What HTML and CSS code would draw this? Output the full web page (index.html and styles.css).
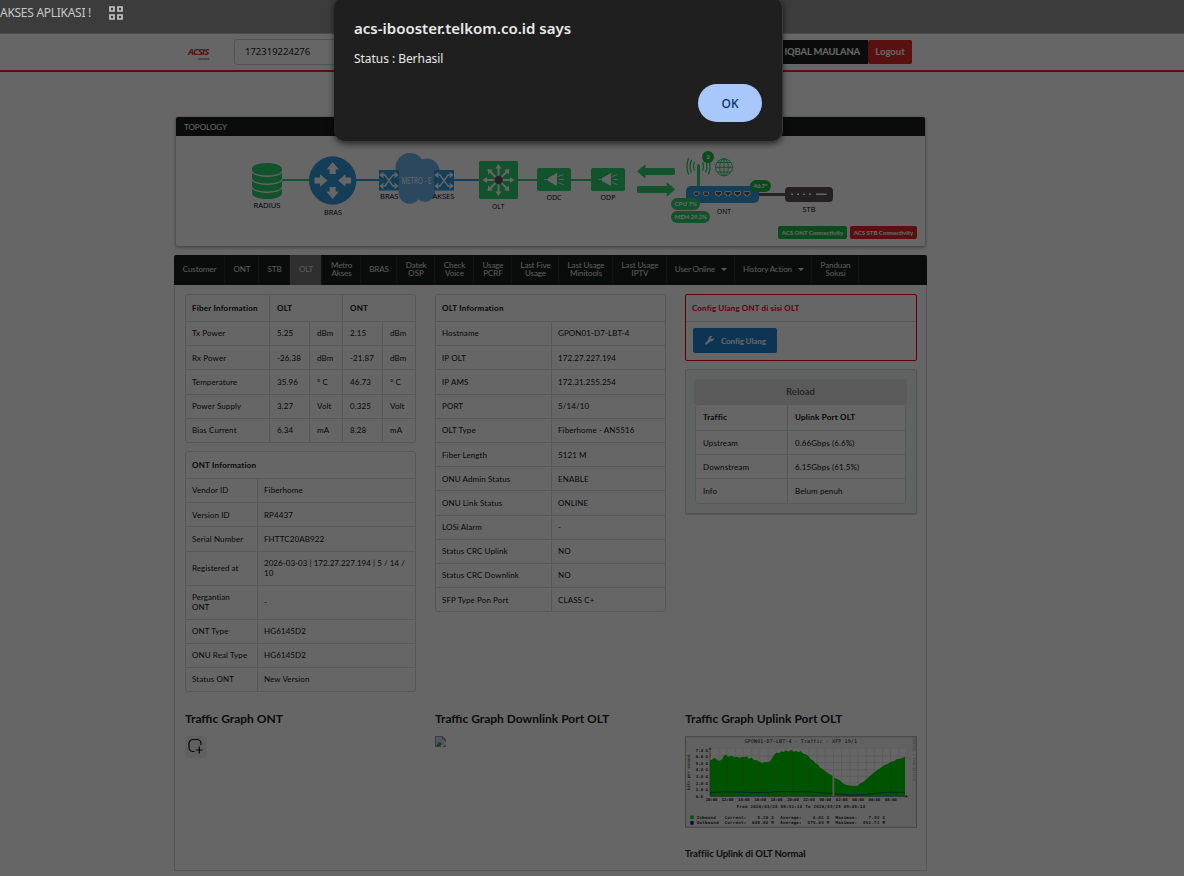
FILE: index.html
```
<!DOCTYPE html>
<html lang="id">
<head>
  <meta charset="UTF-8">
  <meta name="viewport" content="width=device-width, initial-scale=1.0">
  <title>ACSIS</title>
  <link rel="stylesheet" href="styles.css">
</head>
<body>

  <!-- Bookmark bar -->
  <div class="bookmarks">
    <span>AKSES APLIKASI !</span>
    <svg class="apps" viewBox="0 0 14 14"><path d="M1 1h4v4H1zM9 1h4v4H9zM1 9h4v4H1zM9 9h4v4H9z"/></svg>
  </div>

  <div class="page">
    <header class="topbar">
      <div class="logo">ACSIS<small>assurance</small></div>
      <input class="search" type="text" value="172319224276">
      <div class="user">IQBAL MAULANA</div>
      <button class="logout">Logout</button>
    </header>

    <section class="topology">
      <h2>TOPOLOGY</h2>
      <svg class="diagram" viewBox="176 136 749 110">
        <!-- garis -->
        <g stroke-width="2">
          <path class="line-green" d="M282 180h28M516 180h24M570 180h22"/>
          <path class="line-blue" d="M355 180h28M453 180h28"/>
          <path class="line-dark" d="M757 194.500h30" stroke-width="3"/>
        </g>

        <!-- radius -->
        <path class="green" d="M252 169c0-8 30-8 30 0v24c0 8-30 8-30 0z"/>
        <path class="gap" d="M252 171c1 7 29 7 30 0M252 179c1 7 29 7 30 0M252 187c1 7 29 7 30 0"/>
        <text x="253.500" y="207.500" textLength="27" lengthAdjust="spacingAndGlyphs">RADIUS</text>

        <!-- bras -->
        <ellipse class="blue" cx="332.700" cy="180.500" rx="23.700" ry="24.200"/>
        <g class="white">
          <path d="M332.700 162l6.300 7.500h-3.300v4.500h-6v-4.500h-3.300z"/>
          <path d="M332.700 199l6.300-7.500h-3.300v-4.500h-6v4.500h-3.300z"/>
          <path d="M327.500 180.500l-7.500-6.300v3.300h-5.500v6h5.500v3.300z"/>
          <path d="M338 180.500l7.500-6.300v3.300h5.500v6h-5.500v3.300z"/>
        </g>
        <text x="324" y="215" textLength="18" lengthAdjust="spacingAndGlyphs">BRAS</text>

        <!-- metro -->
        <g class="cloud">
          <circle cx="410" cy="167.500" r="14.500"/><circle cx="427" cy="171" r="12.500"/>
          <circle cx="402" cy="180" r="9"/><circle cx="436" cy="180" r="9"/>
          <circle cx="409.500" cy="193" r="10.800"/><circle cx="425" cy="192" r="10"/>
          <rect x="400" y="168" width="35" height="23"/>
        </g>
        <text class="metro" x="401.500" y="184" textLength="30" lengthAdjust="spacingAndGlyphs">METRO - E</text>
        <g class="blue"><rect x="379" y="170" width="20" height="20.500"/><rect x="434" y="170" width="20" height="20.500"/></g>
        <g class="cross">
          <path d="M381 175h4l8 11h4M381 186h4l8-11h4M394.500 172.500l3 2.500-3 2.500M394.500 183.500l3 2.500-3 2.500M383.500 172.500l-3 2.500 3 2.500M383.500 183.500l-3 2.500 3 2.500"/>
          <path d="M436 175h4l8 11h4M436 186h4l8-11h4M449.500 172.500l3 2.500-3 2.500M449.500 183.500l3 2.500-3 2.500M438.500 172.500l-3 2.500 3 2.500M438.500 183.500l-3 2.500 3 2.500"/>
        </g>
        <text x="380" y="199" textLength="18.500" lengthAdjust="spacingAndGlyphs">BRAS</text>
        <text x="432.500" y="199" textLength="22" lengthAdjust="spacingAndGlyphs">AKSES</text>

        <!-- olt -->
        <rect class="green" x="479" y="161" width="39" height="38" rx="2"/>
        <g class="star">
          <path d="M498.500 166.500v27M485 180h27M489.500 171l18 18M507.500 171l-18 18"/>
        </g>
        <g class="white">
          <path d="M498.500 164l3 4.500h-6zM498.500 196l3-4.500h-6zM482.500 180l4.500-3v6zM514.500 180l-4.500-3v6zM487.500 169l5.500.8-4.700 4.700zM509.500 169l-5.500.8 4.700 4.700zM487.500 191l5.500-.8-4.700-4.700zM509.500 191l-5.500-.8 4.700-4.700z"/>
        </g>
        <circle class="dark" cx="498.700" cy="180" r="4.200"/>
        <text x="492" y="209" textLength="12.500" lengthAdjust="spacingAndGlyphs">OLT</text>

        <!-- odc / odp -->
        <g class="green"><rect x="537" y="168" width="34" height="23" rx="2"/><rect x="591" y="168" width="34" height="23" rx="2"/></g>
        <g class="white">
          <path d="M548 178l9-5v13l-9-5z"/><path d="M602 178l9-5v13l-9-5z"/>
        </g>
        <path class="rays" d="M544 179.500h5M559 179.500h5M558 176.500l5.500-2M558 182.500l5.500 2M598 179.500h5M613 179.500h5M612 176.500l5.500-2M612 182.500l5.500 2"/>
        <text x="546.500" y="200.200" textLength="15" lengthAdjust="spacingAndGlyphs">ODC</text>
        <text x="600.500" y="200.200" textLength="15" lengthAdjust="spacingAndGlyphs">ODP</text>

        <!-- panah -->
        <path class="green" d="M637 171.300l8.500-7v3.700h28a1.500 1.500 0 0 1 1.500 1.500v4a1.500 1.500 0 0 1-1.500 1.500h-28v3.800zM675.200 189.300l-8.500-7v3.700h-28.200a1.500 1.500 0 0 0-1.500 1.500v4a1.500 1.500 0 0 0 1.500 1.500h28.200v3.800z"/>

        <!-- ont -->
        <path class="green" d="M697 165.500a1.500 1.500 0 0 1 3 0v21h-3z"/>
        <path class="waves" d="M694.500 162q-2 4 0 8.500M691.500 160q-3 6.500 0 12.500M688.700 158q-3.700 8.500 0 16.500M702.500 162q2 4 0 8.500M705.500 160q3 6.500 0 12.500M708.300 158q3.700 8.500 0 16.500"/>
        <g class="globe">
          <circle cx="724" cy="167.300" r="8.500"/><ellipse cx="724" cy="167.300" rx="4.300" ry="8.500"/>
          <path d="M724 159v17M715.500 167.300h17M717 162.500h14M717 172h14"/>
        </g>
        <rect class="blue" x="686" y="186" width="73" height="17" rx="5"/>
        <path class="ports" d="M694 192h5v2l-1 1.500h-3l-1-1.500zM703.500 192h5v2l-1 1.500h-3l-1-1.500zM715.500 191.500h6v3h-1.500v1.500h-3v-1.500h-1.500zM725 191.500h6v3h-1.500v1.500h-3v-1.500h-1.500zM734.500 191.500h6v3h-1.500v1.500h-3v-1.500h-1.500zM744 191.500h6v3h-1.500v1.500h-3v-1.500h-1.500z"/>
        <text x="717" y="213.500" textLength="14" lengthAdjust="spacingAndGlyphs">ONT</text>

        <g class="badge">
          <circle cx="708" cy="157" r="6"/>
          <rect x="750" y="180" width="21" height="12" rx="6"/>
          <rect x="671" y="198" width="29" height="12" rx="6" class="green"/>
          <rect x="671" y="211" width="39" height="12" rx="6" class="green"/>
          <text x="706.300" y="159.200">2</text>
          <text x="753.500" y="188.200" textLength="14">46.7°</text>
          <text x="674.500" y="206.200" textLength="22.500">CPU 7%</text>
          <text x="674.500" y="219.200" textLength="32.500">MEM 29.3%</text>
        </g>

        <!-- stb -->
        <rect class="dark" x="785" y="187" width="48" height="15" rx="4"/>
        <path class="leds" d="M791 194.300h2M797 194.300h2M803 194.300h2M809 194.300h2M816 194.300h10.500"/>
        <text x="802.500" y="211.500" textLength="13" lengthAdjust="spacingAndGlyphs">STB</text>
      </svg>
      <div class="acs">
        <span class="ok">ACS ONT Connectivity</span>
        <span class="bad">ACS STB Connectivity</span>
      </div>
    </section>

    <nav class="menu">
      <a>Customer</a>
      <a>ONT</a>
      <a>STB</a>
      <a class="active">OLT</a>
      <a>Metro<br>Akses</a>
      <a>BRAS</a>
      <a>Datek<br>OSP</a>
      <a>Check<br>Voice</a>
      <a>Usage<br>PCRF</a>
      <a>Last Five<br>Usage</a>
      <a>Last Usage<br>Minitools</a>
      <a>Last Usage<br>IPTV</a>
      <a>User Online <i class="caret"></i></a>
      <a>History Action <i class="caret"></i></a>
      <a>Panduan<br>Solusi</a>
    </nav>

    <main class="content">
      <div class="column">
        <table class="fiber">
          <colgroup><col class="c-label"><col class="c-val"><col class="c-unit"><col class="c-val"><col class="c-unit"></colgroup>
          <tr><th>Fiber Information</th><th colspan="2">OLT</th><th colspan="2">ONT</th></tr>
          <tr><td>Tx Power</td><td>5.25</td><td>dBm</td><td>2.15</td><td>dBm</td></tr>
          <tr><td>Rx Power</td><td>-26.38</td><td>dBm</td><td>-21.87</td><td>dBm</td></tr>
          <tr><td>Temperature</td><td>35.96</td><td>° C</td><td>46.73</td><td>° C</td></tr>
          <tr><td>Power Supply</td><td>3.27</td><td>Volt</td><td>0.325</td><td>Volt</td></tr>
          <tr><td>Bias Current</td><td>6.34</td><td>mA</td><td>8.28</td><td>mA</td></tr>
        </table>

        <table class="info ont">
          <colgroup><col class="c-name"><col></colgroup>
          <tr><th colspan="2">ONT Information</th></tr>
          <tr><td>Vendor ID</td><td>Fiberhome</td></tr>
          <tr><td>Version ID</td><td>RP4437</td></tr>
          <tr><td>Serial Number</td><td>FHTTC20AB922</td></tr>
          <tr class="tall"><td>Registered at</td><td>2026-03-03 | 172.27.227.194 | 5 / 14 /<br>10</td></tr>
          <tr class="tall"><td>Pergantian<br>ONT</td><td>-</td></tr>
          <tr><td>ONT Type</td><td>HG6145D2</td></tr>
          <tr><td>ONU Real Type</td><td>HG6145D2</td></tr>
          <tr><td>Status ONT</td><td>New Version</td></tr>
        </table>
      </div>

      <div class="column">
        <table class="info olt">
          <colgroup><col class="c-half"><col></colgroup>
          <tr><th colspan="2">OLT Information</th></tr>
          <tr><td>Hostname</td><td>GPON01-D7-LBT-4</td></tr>
          <tr><td>IP OLT</td><td>172.27.227.194</td></tr>
          <tr><td>IP AMS</td><td>172.31.255.254</td></tr>
          <tr><td>PORT</td><td>5/14/10</td></tr>
          <tr><td>OLT Type</td><td>Fiberhome - AN5516</td></tr>
          <tr><td>Fiber Length</td><td>5121 M</td></tr>
          <tr><td>ONU Admin Status</td><td>ENABLE</td></tr>
          <tr><td>ONU Link Status</td><td>ONLINE</td></tr>
          <tr><td>LOSi Alarm</td><td>-</td></tr>
          <tr><td>Status CRC Uplink</td><td>NO</td></tr>
          <tr><td>Status CRC Downlink</td><td>NO</td></tr>
          <tr><td>SFP Type Pon Port</td><td>CLASS C+</td></tr>
        </table>
      </div>

      <div class="column">
        <div class="config">
          <h4>Config Ulang ONT di sisi OLT</h4>
          <button class="config-btn">
            <svg viewBox="0 0 512 512"><path d="M507 115c-3-12-18-16-27-7l-74 74-68-11-11-68 74-74c9-9 5-24-7-27-52-13-109 1-150 42-44 44-57 108-38 163L19 395c-25 25-25 66 0 91s66 25 91 0l187-187c55 20 119 7 163-38 41-41 55-98 47-146zM64 472a24 24 0 1 1 0-48 24 24 0 0 1 0 48z"/></svg>
            Config Ulang
          </button>
        </div>
        <div class="reload">
          <button class="reload-btn">Reload</button>
          <table class="traffic">
            <colgroup><col class="c-traffic"><col></colgroup>
            <tr><th>Traffic</th><th>Uplink Port OLT</th></tr>
            <tr><td>Upstream</td><td>0.66Gbps (6.6%)</td></tr>
            <tr><td>Downstream</td><td>6.15Gbps (61.5%)</td></tr>
            <tr><td>Info</td><td>Belum penuh</td></tr>
          </table>
        </div>
      </div>

      <!-- Grafik trafik -->
      <div class="graph">
        <h3>Traffic Graph ONT</h3>
        <div class="add">
          <svg viewBox="0 0 22 22"><path d="M16 9V7.500a4 4 0 0 0-4-4H8a4 4 0 0 0-4 4V11.500a4 4 0 0 0 4 4h1.500M14.300 10.500v7M10.800 14h7"/></svg>
        </div>
      </div>

      <div class="graph">
        <h3>Traffic Graph Downlink Port OLT</h3>
        <svg class="broken" viewBox="0 0 11 11">
          <path fill="#c5d5f5" d="M.5.500h7l3 3v7H.5z"/>
          <path fill="#48a03c" d="M1 10l3-4 3 2-2 2z"/>
          <path fill="none" stroke="#fff" d="M6 10.500l5-4.500"/>
          <path fill="none" stroke="#999" d="M6 10.500H.5V.500h7l3 3V6M7.500.500v3h3M8 10.500h2.500V9"/>
        </svg>
      </div>

      <div class="graph">
        <h3>Traffic Graph Uplink Port OLT</h3>
        <svg class="rrd" viewBox="31 109 695 274">
          <rect class="rrd-bg" x="32.500" y="110.500" width="692" height="271"/>
          <rect class="rrd-plot" x="106" y="148" width="584" height="141"/>
          <path class="rrd-grid" d="M106 168h584M106 188h584M106 209h584M106 229h584M106 249h584M106 269h584M133 148v141M182 148v141M231 148v141M280 148v141M329 148v141M378 148v141M427 148v141M476 148v141M525 148v141M574 148v141M623 148v141M672 148v141"/>
          <path class="rrd-area" d="M106 289V181L112 179L118 173L124 176L130 182L138 181L144 175L148 166L154 164L160 170L166 168L172 167L178 172L186 170L194 173L202 171L210 172L216 169L222 176L230 173L238 180L246 181L254 185L262 189L270 186L278 187L286 184L292 174L298 164L306 158L312 160L320 154L326 156L334 152L340 155L350 150L356 155L364 153L370 156L378 154L386 162L394 163L402 170L408 178L416 182L422 190L430 195L436 203L444 208L450 213L456 217L464 223L473 227V289z"/>
          <path class="rrd-area" d="M478 289V233L486 237L494 240L502 248L512 254L520 256L528 257L540 257L548 258L556 250L564 247L574 238L584 229L592 221L602 214L612 207L620 202L628 195L638 192L648 185L656 184L664 178L674 176L682 174L690 170V289z"/>
          <path class="rrd-grid2" d="M157 148v141M206 148v141M255 148v141M304 148v141M353 148v141M402 148v141M451 148v141M500 148v141M549 148v141M598 148v141M647 148v141"/>
          <path class="rrd-line" d="M106 278l40-2 40 0 50 2 50-1 20-2 60 0 40 1 40 3 27 1M478 281l20 2 30 2 40-1 40-5 30-2 52 0"/>
          <path class="rrd-axis" d="M106 144v145h590"/>
          <path class="rrd-tip" d="M103 149l3-7 4 7zM692 285l7 4-7 4z"/>
          <text class="rrd-title" x="210" y="130" textLength="336">GPON01-D7-LBT-4 - Traffic - XFP 19/1</text>
          <g>
            <text x="63" y="155" textLength="37">7.0 G</text><text x="63" y="174" textLength="37">6.0 G</text>
            <text x="63" y="194" textLength="37">5.0 G</text><text x="63" y="214" textLength="37">4.0 G</text>
            <text x="63" y="234" textLength="37">3.0 G</text><text x="63" y="254" textLength="37">2.0 G</text>
            <text x="63" y="274" textLength="37">1.0 G</text><text x="63" y="294" textLength="22">0.0</text>
          </g>
          <text class="rrd-label" transform="translate(46 270) rotate(-90)" textLength="106">bits per second</text>
          <text class="rrd-credit" transform="translate(713 115) rotate(90)" textLength="128">RRDTOOL / TOBI OETIKER</text>
          <g>
            <text x="93" y="302" textLength="35">10:00</text><text x="141" y="302" textLength="35">12:00</text>
            <text x="190" y="302" textLength="35">14:00</text><text x="239" y="302" textLength="35">16:00</text>
            <text x="288" y="302" textLength="35">18:00</text><text x="337" y="302" textLength="35">20:00</text>
            <text x="385" y="302" textLength="35">22:00</text><text x="434" y="302" textLength="35">00:00</text>
            <text x="483" y="302" textLength="35">02:00</text><text x="532" y="302" textLength="35">04:00</text>
            <text x="581" y="302" textLength="35">06:00</text><text x="630" y="302" textLength="35">08:00</text>
          </g>
          <text x="186" y="324" textLength="385">From 2026/03/28 09:51:14 To 2026/03/29 09:45:14</text>
          <rect class="rrd-in" x="47" y="346" width="10" height="11"/>
          <rect class="rrd-out" x="47" y="363" width="10" height="11"/>
          <g>
            <text x="66" y="356" textLength="57">Inbound</text><text x="150" y="356" textLength="64">Current:</text>
            <text x="248" y="356" textLength="49">5.20 G</text><text x="316" y="356" textLength="64">Average:</text>
            <text x="414" y="356" textLength="49">4.01 G</text><text x="482" y="356" textLength="64">Maximum:</text>
            <text x="581" y="356" textLength="49">7.02 G</text>
            <text x="66" y="372" textLength="66">Outbound</text><text x="150" y="372" textLength="64">Current:</text>
            <text x="232" y="372" textLength="65">649.80 M</text><text x="316" y="372" textLength="64">Average:</text>
            <text x="398" y="372" textLength="65">575.03 M</text><text x="482" y="372" textLength="64">Maximum:</text>
            <text x="564" y="372" textLength="66">852.71 M</text>
          </g>
        </svg>
        <p>Traffiic Uplink di OLT Normal</p>
      </div>
    </main>
    <div class="backdrop"></div>
  </div>

  <!-- Dialog -->
  <div class="dialog">
    <h1>acs-ibooster.telkom.co.id says</h1>
    <p>Status : Berhasil</p>
    <button>OK</button>
  </div>

</body>
</html>
```
FILE: styles.css
```
* {
  box-sizing: border-box;
}

body {
  margin: 0;
  height: 876px;
  overflow: hidden;
  position: relative;
  font-family: Lato, sans-serif;
  background: #666;
}

button {
  font-family: inherit;
  border: none;
  padding: 0;
}

/* Bookmark bar */
.bookmarks {
  height: 34px;
  background: #3c3c3c;
  border-bottom: 1px solid #4d4d4d;
  display: flex;
  align-items: center;
  gap: 16px;
  padding-bottom: 8px;
  font-family: "Noto Sans", sans-serif;
  font-size: 12px;
  color: #c7c7c7;
}

.bookmarks span {
  width: 93px;
  white-space: nowrap;
  letter-spacing: -0.28px;
}

.apps {
  width: 14px;
  height: 14px;
  fill: none;
  stroke: #c7c7c7;
  stroke-width: 1.7;
}

/* Halaman */
.page {
  position: relative;
  height: 842px;
  background: #fff;
}

.backdrop {
  position: absolute;
  inset: 0;
  background: rgba(0, 0, 0, 0.6);
}

.topbar {
  height: 38px;
  border-bottom: 2px solid #db2828;
  display: flex;
  align-items: center;
  padding: 0 0 1px 188px;
}

.logo {
  width: 46px;
  padding-top: 3px;
  font-family: "Open Sans", sans-serif;
  font-size: 9.5px;
  line-height: 11px;
  font-weight: bold;
  font-style: italic;
  letter-spacing: -0.9px;
  color: #db2828;
}

.logo small {
  display: block;
  margin-left: 10px;
  font-size: 2.5px;
  line-height: 4px;
  letter-spacing: -0.1px;
  color: #777;
}

.search {
  width: 440px;
  height: 26px;
  padding: 0 10px;
  border: 1px solid #ccc;
  border-radius: 3px;
  font-family: "Noto Sans", sans-serif;
  font-size: 9.5px;
  color: #222;
}

.user {
  width: 128px;
  height: 24px;
  margin-left: 66px;
  padding-right: 8px;
  background: #1a1f1d;
  color: #fff;
  font-size: 9.5px;
  font-weight: bold;
  line-height: 24px;
  letter-spacing: -0.2px;
  text-align: right;
}

.logout {
  width: 44px;
  height: 24px;
  border-radius: 2px;
  background: #db2828;
  color: #fff;
  font-size: 9.5px;
  font-weight: bold;
}

/* Topology */
.topology {
  position: relative;
  width: 749px;
  height: 129px;
  margin: 45px 0 9px 176px;
  border-radius: 2px;
  box-shadow: 0 1px 3px 1px rgba(0, 0, 0, 0.3);
}

.topology h2 {
  margin: 0;
  height: 19px;
  padding-left: 8px;
  border-radius: 2px 2px 0 0;
  background: #1a1f1d;
  color: #fff;
  font-size: 8px;
  font-weight: normal;
  line-height: 20px;
}

.diagram {
  display: block;
  width: 749px;
  height: 110px;
  font-family: "Open Sans", sans-serif;
  font-size: 8px;
}

.green { fill: #2ecc71; }
.blue { fill: #3498db; }
.dark { fill: #5b5451; }
.white { fill: #fff; }
.cloud { fill: #6fb4ee; }
.line-green { stroke: #2ecc71; }
.line-blue { stroke: #3498db; }
.line-dark { stroke: #5b5451; }

.gap, .cross, .star, .rays, .leds {
  fill: none;
  stroke: #fff;
}

.gap { stroke-width: 1.3; }
.cross { stroke-width: 1.3; }
.star { stroke-width: 2; }
.rays { stroke-width: 0.8; }
.leds { stroke-width: 1.6; }

.waves, .globe {
  fill: none;
  stroke: #2ecc71;
  stroke-width: 1.3;
}

.globe { stroke-width: 1; }

.ports {
  fill: #5b5451;
  stroke: #fff;
  stroke-width: 0.8;
}

.metro {
  fill: #fff;
  font-size: 9px;
}

.badge { fill: #21ba45; }

.badge text {
  fill: #fff;
  font-family: Lato, sans-serif;
  font-size: 6px;
  font-weight: 900;
}

.acs {
  position: absolute;
  right: 8px;
  bottom: 7px;
  display: flex;
  gap: 3px;
}

.acs span {
  height: 13px;
  width: 69px;
  border-radius: 2px;
  color: #fff;
  font-size: 6px;
  font-weight: 900;
  line-height: 13px;
  text-align: center;
  white-space: nowrap;
}

.acs .bad { width: 67px; background: #db2828; }
.acs .ok { background: #21ba45; }

/* Menu */
.menu {
  display: grid;
  grid-template-columns: 51px 34px 31px 32px 39px 36px 38px 39px 38px 47px 54px 54px 68px 77px 47px;
  width: 753px;
  height: 30px;
  margin-left: 174px;
  border-radius: 2px 2px 0 0;
  background: #1a1f1d;
}

.menu a {
  display: flex;
  align-items: center;
  justify-content: center;
  padding: 0 0 2px 1px;
  border-right: 1px solid #2b2f2d;
  color: #e0e0e0;
  font-size: 8px;
  line-height: 8px;
  letter-spacing: -0.1px;
  text-align: center;
  white-space: nowrap;
}

.menu .active {
  background: #767676;
}

.caret {
  margin-left: 6px;
  border: 3px solid transparent;
  border-top-color: #e0e0e0;
  border-bottom: 0;
}

/* Isi */
.content {
  display: grid;
  grid-template-columns: 231px 231px 232px;
  grid-template-rows: 418px auto;
  column-gap: 19px;
  width: 753px;
  height: 586px;
  margin-left: 174px;
  padding: 9px 9px 0 10px;
  border: 1px solid #d4d4d5;
  border-top: none;
}

table {
  width: 231px;
  table-layout: fixed;
  border-collapse: separate;
  border-spacing: 0;
  border: 1px solid #dadadb;
  border-radius: 3px;
  font-size: 8px;
  line-height: 10px;
  color: #111;
}

td, th {
  height: 24.2px;
  padding: 0 0 0 7px;
  border-top: 1px solid #dcdcdc;
  border-left: 1px solid #dcdcdc;
  text-align: left;
  white-space: nowrap;
  letter-spacing: 0.1px;
}

th {
  height: 26px;
  border-top: none;
  letter-spacing: 0.22px;
}

.info td {
  padding-left: 6px;
}

td:first-child, th:first-child {
  padding-left: 6px;
  border-left: none;
}

.fiber tr:nth-child(2) td, .info tr:nth-child(2) td {
  padding-bottom: 2px;
}

.fiber { margin-bottom: 8px; }
.tall td { height: 34px; letter-spacing: 0.04px; }
.c-label { width: 83px; }
.c-val { width: 40px; }
.c-unit { width: 33px; }
.c-name { width: 71px; }
.c-half { width: 115px; }
.c-traffic { width: 91px; }

.config {
  height: 67px;
  margin-bottom: 8px;
  border: 1px solid #f00010;
  border-radius: 2px;
}

.config h4 {
  margin: 0;
  height: 27px;
  padding-left: 6px;
  border-bottom: 1px solid #dcdcdc;
  color: #f00010;
  font-size: 8px;
  line-height: 26px;
  letter-spacing: 0.15px;
}

.config-btn {
  display: flex;
  align-items: center;
  gap: 7px;
  width: 84px;
  height: 25px;
  margin: 6px 0 0 7px;
  padding-left: 12px;
  border-radius: 2px;
  background: #2185d0;
  color: #fff;
  font-size: 8px;
  font-weight: bold;
  letter-spacing: -0.1px;
  white-space: nowrap;
}

.config-btn svg {
  width: 9px;
  height: 9px;
  fill: #fff;
}

.reload {
  height: 145px;
  padding: 9px 9px 0 8px;
  border: 1px solid #d0d3d2;
  border-radius: 2px;
  background: #f2f7f5;
  box-shadow: 0 1px 1px rgba(0, 0, 0, 0.15);
}

.reload-btn {
  display: block;
  width: 213px;
  height: 25px;
  border-radius: 2px 2px 0 0;
  background: #e0e1e2;
  color: #666;
  font-size: 9.5px;
  font-weight: bold;
}

.traffic {
  width: 211px;
  margin-left: 1px;
  background: #fff;
}

.traffic th {
  height: 25px;
  padding-bottom: 2px;
}

.traffic td:first-child, .traffic th:first-child {
  padding-left: 7px;
}

.graph h3 {
  margin: 0 0 10px;
  font-size: 12px;
  line-height: 14px;
  color: #222;
  white-space: nowrap;
}

.add {
  width: 22px;
  height: 22px;
  border-radius: 4px;
  background: #f0f0f0;
}

.add svg {
  display: block;
  fill: none;
  stroke: #111;
  stroke-width: 1.2;
}

.broken {
  display: block;
  width: 11px;
  height: 11px;
}

.rrd {
  display: block;
  width: 232px;
  height: 92px;
  font-family: "DejaVu Sans Mono", monospace;
  font-size: 12px;
  font-weight: bold;
  fill: #222;
}

.rrd-bg { fill: #f3f3f3; stroke: #aaa; stroke-width: 3; }
.rrd-plot { fill: #fff; }
.rrd-grid { stroke: #ccc; stroke-width: 1.5; fill: none; }
.rrd-grid2 { stroke: #c04040; stroke-width: 1; opacity: 0.4; }
.rrd-area { fill: #00cf00; }
.rrd-line { fill: none; stroke: #002a97; stroke-width: 2; }
.rrd-axis { fill: none; stroke: #555; stroke-width: 2; }
.rrd-tip { fill: #802020; }
.rrd-title { font-size: 15px; font-weight: normal; }
.rrd-label { font-weight: normal; }
.rrd-credit { font-size: 9px; fill: #aaa; }
.rrd-in { fill: #00cf00; }
.rrd-out { fill: #002a97; }

.graph p {
  margin: 19px 0 0;
  font-size: 9.5px;
  line-height: 13px;
  font-weight: bold;
  letter-spacing: -0.06px;
  color: #222;
}

/* Dialog */
.dialog {
  position: absolute;
  left: 334px;
  top: -4px;
  width: 449px;
  height: 146px;
  padding: 21px 20px 0 20px;
  border: 1px solid #3a3a3a;
  border-left: none;
  border-radius: 12px;
  background: #1f1f1f;
  box-shadow: 0 2px 6px rgba(0, 0, 0, 0.6);
  color: #e8e8e8;
  font-family: "Noto Sans", sans-serif;
}

.dialog h1 {
  margin: 0;
  font-size: 15px;
  line-height: 20px;
  font-weight: 600;
}

.dialog p {
  margin: 11px 0 15px;
  font-size: 12px;
  line-height: 20px;
  letter-spacing: -0.05px;
}

.dialog button {
  display: block;
  width: 64px;
  height: 38px;
  margin-left: auto;
  border-radius: 19px;
  background: #a8c7fa;
  color: #062e6f;
  font-size: 12px;
  font-weight: 500;
}
```
